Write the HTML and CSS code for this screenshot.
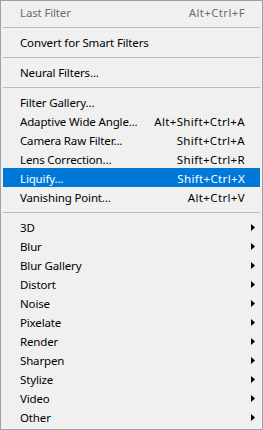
FILE: index.html
```html
<!DOCTYPE html>
<html>
<head>
<meta charset="utf-8">
<link rel="stylesheet" href="styles.css">
</head>
<body>
<div class="menu">
  <div class="item disabled"><span class="label">Last Filter</span><span class="key">Alt+Ctrl+F</span></div>
  <div class="sep"></div>
  <div class="item"><span class="label">Convert for Smart Filters</span></div>
  <div class="sep"></div>
  <div class="item"><span class="label">Neural Filters...</span></div>
  <div class="sep"></div>
  <div class="item"><span class="label">Filter Gallery...</span></div>
  <div class="item"><span class="label">Adaptive Wide Angle...</span><span class="key">Alt+Shift+Ctrl+A</span></div>
  <div class="item"><span class="label">Camera Raw Filter...</span><span class="key">Shift+Ctrl+A</span></div>
  <div class="item"><span class="label">Lens Correction...</span><span class="key">Shift+Ctrl+R</span></div>
  <div class="item active"><span class="label">Liquify...</span><span class="key">Shift+Ctrl+X</span></div>
  <div class="item"><span class="label">Vanishing Point...</span><span class="key">Alt+Ctrl+V</span></div>
  <div class="sep"></div>
  <div class="item sub"><span class="label">3D</span><svg class="arrow" width="4" height="7" viewBox="0 0 4 7"><path d="M0 0L4 3.5L0 7Z"/></svg></div>
  <div class="item sub"><span class="label">Blur</span><svg class="arrow" width="4" height="7" viewBox="0 0 4 7"><path d="M0 0L4 3.5L0 7Z"/></svg></div>
  <div class="item sub"><span class="label">Blur Gallery</span><svg class="arrow" width="4" height="7" viewBox="0 0 4 7"><path d="M0 0L4 3.5L0 7Z"/></svg></div>
  <div class="item sub"><span class="label">Distort</span><svg class="arrow" width="4" height="7" viewBox="0 0 4 7"><path d="M0 0L4 3.5L0 7Z"/></svg></div>
  <div class="item sub"><span class="label">Noise</span><svg class="arrow" width="4" height="7" viewBox="0 0 4 7"><path d="M0 0L4 3.5L0 7Z"/></svg></div>
  <div class="item sub"><span class="label">Pixelate</span><svg class="arrow" width="4" height="7" viewBox="0 0 4 7"><path d="M0 0L4 3.5L0 7Z"/></svg></div>
  <div class="item sub"><span class="label">Render</span><svg class="arrow" width="4" height="7" viewBox="0 0 4 7"><path d="M0 0L4 3.5L0 7Z"/></svg></div>
  <div class="item sub"><span class="label">Sharpen</span><svg class="arrow" width="4" height="7" viewBox="0 0 4 7"><path d="M0 0L4 3.5L0 7Z"/></svg></div>
  <div class="item sub"><span class="label">Stylize</span><svg class="arrow" width="4" height="7" viewBox="0 0 4 7"><path d="M0 0L4 3.5L0 7Z"/></svg></div>
  <div class="item sub"><span class="label">Video</span><svg class="arrow" width="4" height="7" viewBox="0 0 4 7"><path d="M0 0L4 3.5L0 7Z"/></svg></div>
  <div class="item sub"><span class="label">Other</span><svg class="arrow" width="4" height="7" viewBox="0 0 4 7"><path d="M0 0L4 3.5L0 7Z"/></svg></div>
</div>
</body>
</html>
```

FILE: styles.css
```css
* { box-sizing: border-box; }
html, body { margin: 0; padding: 0; background: #f0f0f0; }
.menu {
  width: 263px;
  height: 430px;
  background: #f0f0f0;
  border: 1px solid #a0a0a0;
  padding: 1px 2px 3px 2px;
  display: flex;
  flex-direction: column;
  font-family: "Noto Sans", "DejaVu Sans", sans-serif;
  font-size: 11.5px;
  color: #000;
}
.item {
  height: 19px;
  line-height: 19px;
  padding: 1px 5px 0 17px;
  display: flex;
  align-items: flex-start;
  white-space: nowrap;
}
.label { flex: 1; letter-spacing: -0.15px; }
.key { margin-right: 10px; letter-spacing: 0.35px; }
.disabled { color: #6d6d6d; }
.active { background: #0078d7; color: #fff; }
.sep {
  height: 1px;
  margin: 6px 0 4px 0;
  background: #bcbcbc;
}
.arrow {
  align-self: center;
  margin-top: 1px;
  fill: #000;
}
```
